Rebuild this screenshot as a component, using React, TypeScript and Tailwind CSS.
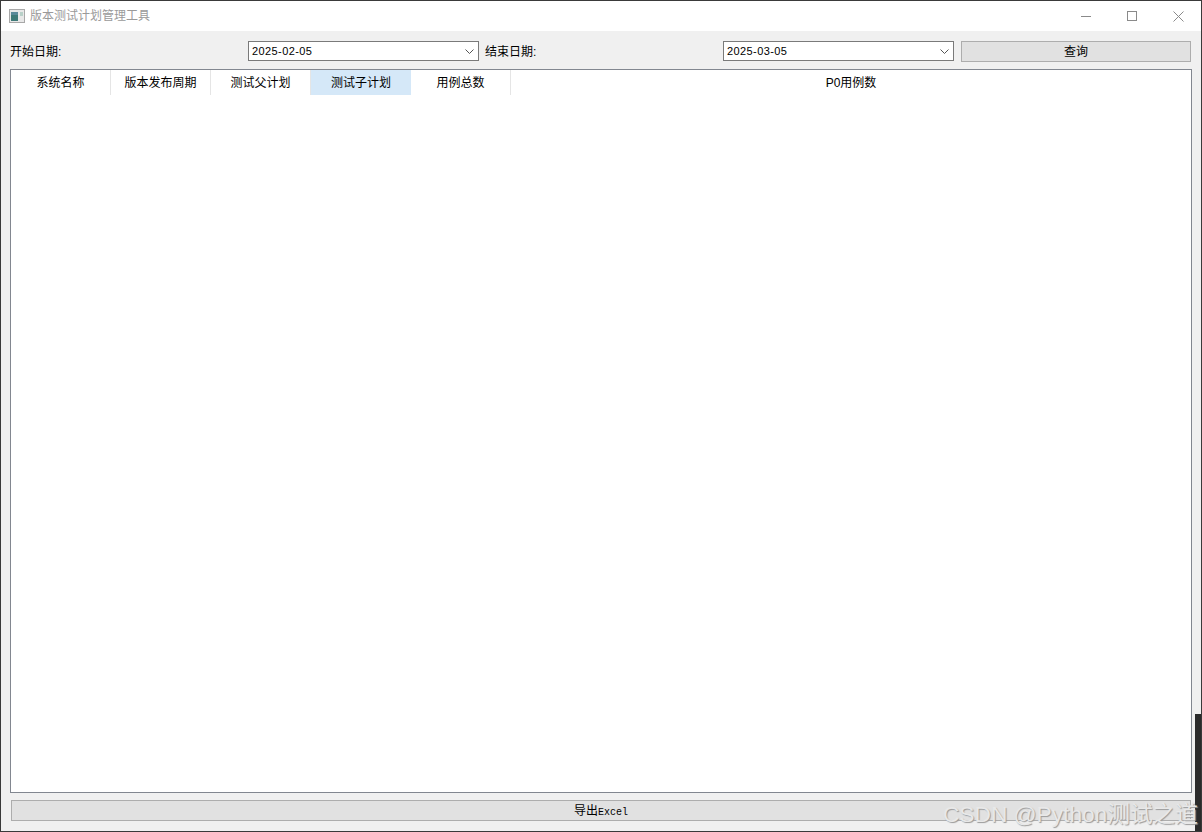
const uiFont = { fontFamily: '"Liberation Sans", "Noto Sans CJK SC", sans-serif' };

function Chevron() {
  return (
    <svg width="9" height="5" viewBox="0 0 9 5" fill="none" stroke="#555" strokeWidth="1">
      <path d="M0.5 0.5l4 4 4-4" />
    </svg>
  );
}

function DateField({ value }: { value: string }) {
  return (
    <div className="flex h-[20px] w-[231px] shrink-0 items-center justify-between border border-[#7a7a7a] bg-white pl-[3px] pr-[4px] text-[11px] tracking-[0.4px] text-black">
      <span>{value}</span>
      <Chevron />
    </div>
  );
}

const columns = ['系统名称', '版本发布周期', '测试父计划', '测试子计划', '用例总数'];

export default function App() {
  return (
    <div style={uiFont} className="relative flex h-[832px] w-[1202px] flex-col overflow-hidden border border-[#3a3a3a] bg-[#f0f0f0] text-[12px] text-black">
      <div className="flex h-[30px] shrink-0 items-center bg-white pl-[8px]">
        <svg width="16" height="14" viewBox="0 0 16 14" className="mr-[5px]">
          <rect x="0.5" y="0.5" width="15" height="13" fill="#e8e8e8" stroke="#a8a8a8" />
          <rect x="2" y="3" width="7" height="9" fill="#3f7a78" />
          <rect x="2" y="3" width="7" height="3" fill="#5b8a9a" />
          <rect x="11" y="3" width="3" height="4" fill="#b8d0c8" />
        </svg>
        <span className="text-[12px] text-[#9a9a9a]">版本测试计划管理工具</span>
        <div className="ml-auto flex h-full items-center">
          <div className="flex w-[46px] justify-center">
            <svg width="10" height="10" viewBox="0 0 10 10" stroke="#8a8a8a"><path d="M0 5.5h10" /></svg>
          </div>
          <div className="flex w-[46px] justify-center">
            <svg width="10" height="10" viewBox="0 0 10 10" fill="none" stroke="#8a8a8a"><rect x="0.5" y="0.5" width="9" height="9" /></svg>
          </div>
          <div className="flex w-[46px] justify-center">
            <svg width="11" height="11" viewBox="0 0 11 11" stroke="#8a8a8a"><path d="M0.5 0.5l10 10M10.5 0.5l-10 10" /></svg>
          </div>
        </div>
      </div>

      <div className="flex items-start pl-[9px] pt-[10px]">
        <span className="w-[238px] shrink-0 pt-[3px] leading-[16px]">开始日期:</span>
        <DateField value="2025-02-05" />
        <span className="ml-[6px] w-[238px] shrink-0 pt-[3px] leading-[16px]">结束日期:</span>
        <DateField value="2025-03-05" />
        <button className="ml-[7px] h-[21px] w-[230px] shrink-0 border border-[#adadad] bg-[#e1e1e1] pt-[1px] text-[12px]">查询</button>
      </div>

      <div className="ml-[9px] mt-[7px] h-[724px] w-[1182px] border border-[#828790] bg-white">
        <div className="flex h-[25px]">
          {columns.map((name, i) => (
            <div
              key={name}
              className={i === 3 ? 'flex w-[100px] items-center justify-center bg-[#d5e8f8]' : 'flex w-[100px] items-center justify-center border-r border-[#e5e5e5]'}
            >
              {name}
            </div>
          ))}
          <div className="flex flex-1 items-center justify-center">P0用例数</div>
        </div>
      </div>

      <button className="ml-[10px] mt-[7px] h-[21px] w-[1180px] shrink-0 border border-[#adadad] bg-[#e1e1e1] text-[12px]">
        导出<span style={{ fontFamily: '"Liberation Mono", monospace' }} className="text-[10px]">Excel</span>
      </button>

      <div className="absolute bottom-0 right-0 top-[713px] w-[6px] bg-[#2b2b2b]" />
      <div className="absolute bottom-[3px] right-[3px] text-[22.7px] leading-[28px] text-[#e8e8e8] [text-shadow:1px_1px_1px_#9a9a9a]">CSDN @Python测试之道</div>
    </div>
  );
}
